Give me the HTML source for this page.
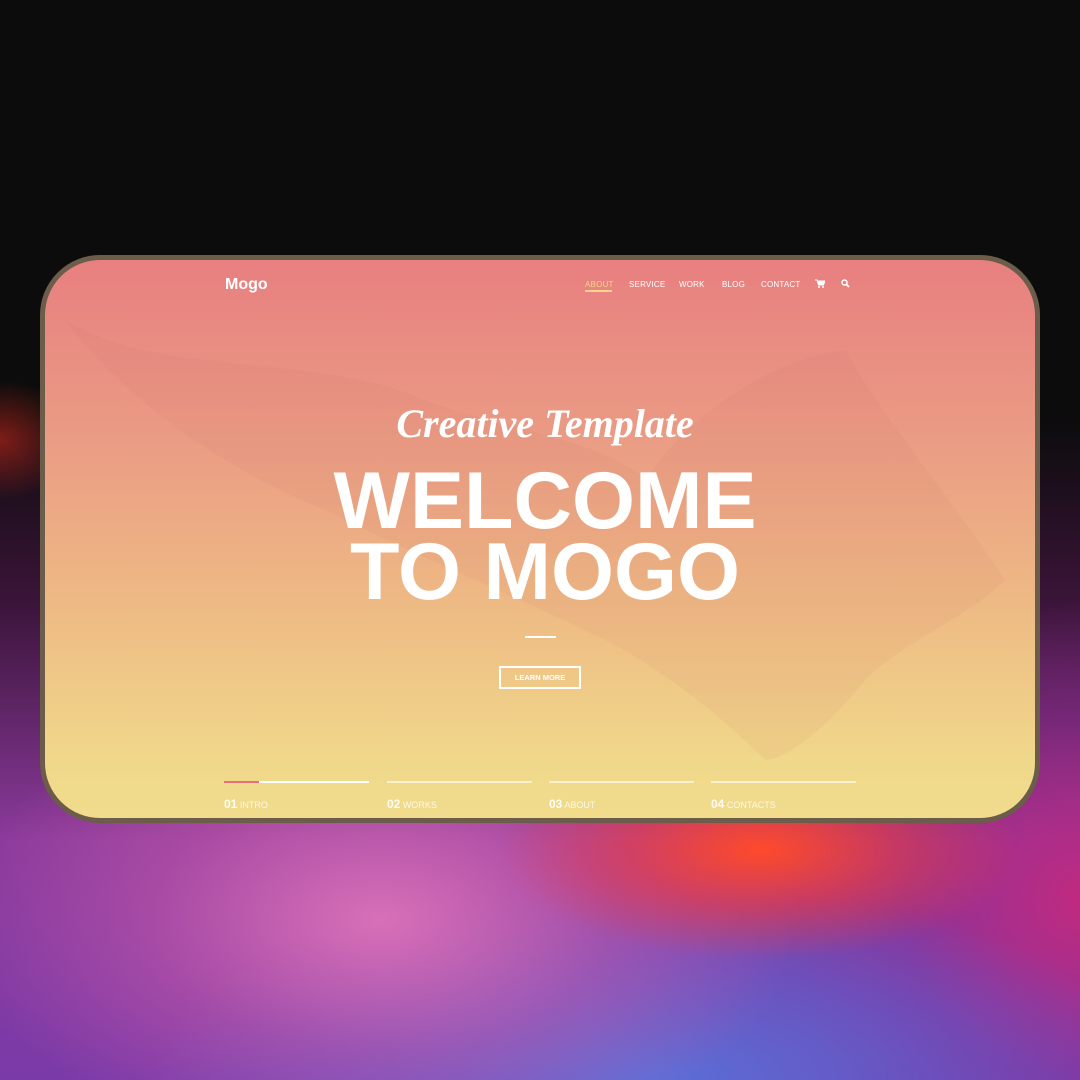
<!DOCTYPE html>
<html><head><meta charset="utf-8"><style>
*{margin:0;padding:0;box-sizing:border-box}
body{width:1080px;height:1080px;overflow:hidden;position:relative;font-family:"Liberation Sans",sans-serif;
background:
radial-gradient(ellipse 260px 110px at 760px 850px,#ff4a2a 0%,rgba(240,60,60,0.6) 50%,rgba(0,0,0,0) 100%),
radial-gradient(ellipse 420px 240px at 380px 920px,#d870b8 0%,rgba(200,90,170,0.5) 55%,rgba(0,0,0,0) 100%),
radial-gradient(ellipse 500px 200px at 650px 1080px,#5a70d8 0%,rgba(90,100,210,0.5) 60%,rgba(0,0,0,0) 100%),
radial-gradient(ellipse 300px 300px at 1080px 900px,#c02a80 0%,rgba(150,40,140,0.4) 60%,rgba(0,0,0,0) 100%),
radial-gradient(ellipse 80px 60px at 0px 440px,rgba(200,40,30,.6) 0%,rgba(0,0,0,0) 100%),
linear-gradient(180deg,#0c0c0c 0,#0c0c0c 420px,#3a1438 600px,#8a3a9c 840px,#7a3aa8 1080px);}
.card{position:absolute;left:40px;top:255px;width:1000px;height:568px;border-radius:60px;border:5px solid #6c5c4a;overflow:hidden;
background:linear-gradient(180deg,#e87f80 0%,#ea9a84 30%,#eeb884 60%,#f0d88a 90%,#f0dc8c 100%)}
.abs{position:absolute}
.nav a{position:absolute;top:20px;color:#fff;font-size:8px;letter-spacing:.2px}
.w{color:#fff}
.bar{position:absolute;top:521px;height:2px;width:145px;background:rgba(255,255,255,.6)}
.lab{position:absolute;top:537px;color:rgba(255,255,255,.8);font-size:9px}
.lab b{font-size:12px;color:rgba(255,255,255,.9)}
</style></head><body>
<div class="card">
<svg class="abs" style="left:0;top:0" width="1000" height="568" viewBox="0 0 1000 568">
<path d="M20 60 C120 120 260 90 380 140 C460 170 560 180 600 220 C640 160 720 100 800 90 C840 160 900 230 960 320 C920 360 860 380 820 420 C780 470 740 500 720 500 C660 440 600 400 560 380 C480 340 380 300 280 250 C180 210 80 140 20 60Z" fill="#c86a60" opacity=".07"/>
</svg>
<div class="abs w" style="left:180px;top:16px;font-size:16px;font-weight:bold">Mogo</div>
<div class="nav">
<a style="left:540px;color:#f3d68a">ABOUT</a>
<div class="abs" style="left:540px;top:30px;width:27px;height:2px;background:#f3d68a"></div>
<a style="left:584px">SERVICE</a><a style="left:634px">WORK</a><a style="left:677px">BLOG</a><a style="left:716px">CONTACT</a>
<svg class="abs" style="left:770px;top:19px" width="10" height="9" viewBox="0 0 10 9"><path d="M0 1h2l1.5 5h5L10 2H3" fill="#fff" stroke="#fff" stroke-width="1"/><circle cx="4" cy="8" r="1" fill="#fff"/><circle cx="8" cy="8" r="1" fill="#fff"/></svg>
<svg class="abs" style="left:796px;top:19px" width="9" height="9" viewBox="0 0 9 9"><circle cx="3.5" cy="3.5" r="2.5" fill="none" stroke="#fff" stroke-width="1.5"/><path d="M5.5 5.5L8 8" stroke="#fff" stroke-width="1.8"/></svg>
</div>
<div class="abs w" style="left:0;width:1000px;text-align:center;top:140px;font-family:'Liberation Serif',serif;font-style:italic;font-weight:bold;font-size:40px">Creative Template</div>
<div class="abs w" style="left:0;width:1000px;text-align:center;top:206px;font-weight:bold;font-size:81px;line-height:71px">WELCOME<br>TO MOGO</div>
<div class="abs" style="left:480px;top:376px;width:31px;height:2px;background:#fff"></div>
<div class="abs w" style="left:454px;top:406px;width:82px;height:23px;border:2px solid #fff;font-size:7.5px;font-weight:bold;text-align:center;line-height:19px">LEARN MORE</div>
<div class="bar" style="left:179px;background:#fff"></div>
<div class="abs" style="left:179px;top:521px;width:35px;height:2px;background:#ea6e78"></div>
<div class="bar" style="left:342px"></div><div class="bar" style="left:504px"></div><div class="bar" style="left:666px"></div>
<div class="lab" style="left:179px"><b>01</b> INTRO</div>
<div class="lab" style="left:342px"><b>02</b> WORKS</div>
<div class="lab" style="left:504px"><b>03</b> ABOUT</div>
<div class="lab" style="left:666px"><b>04</b> CONTACTS</div>
</div>
</body></html>
